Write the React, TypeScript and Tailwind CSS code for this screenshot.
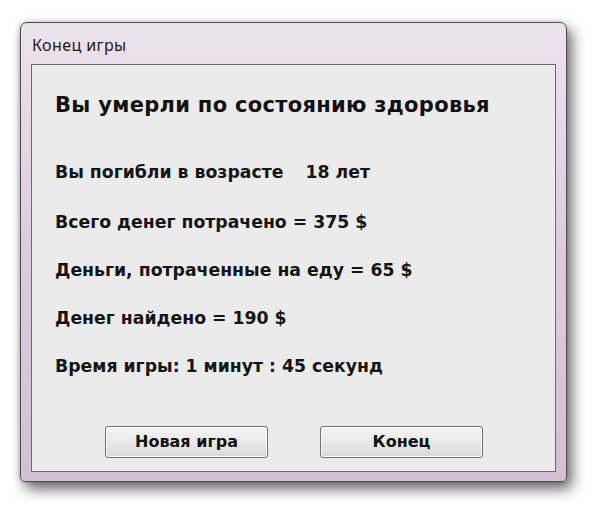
import React from 'react'

const rows = [
  'Всего денег потрачено = 375 $',
  'Деньги, потраченные на еду = 65 $',
  'Денег найдено = 190 $',
  'Время игры: 1 минут : 45 секунд',
]

function DialogButton({ label }: { label: string }) {
  return (
    <button className="h-[32px] w-[163px] rounded-[3px] border border-[#707070] bg-gradient-to-b from-[#f4f4f4] via-[#e9e9e9] to-[#d9d9d9] text-[16px] font-bold text-[#111] shadow-[inset_0_0_0_1px_#fcfcfc]">
      {label}
    </button>
  )
}

export default function App() {
  return (
    <div className="h-[513px] w-[600px] bg-white pl-[20px] pt-[22px] font-['DejaVu_Sans',sans-serif]">
      <div className="flex h-[460px] w-[547px] flex-col rounded-t-[7px] rounded-b-[5px] border border-[#4d4d4d] bg-gradient-to-b from-[#ece3eb] via-[#ddcbdd] to-[#d4bfd5] px-[10px] pb-[9px] shadow-[5px_7px_14px_rgba(0,0,0,0.6),-1px_0_4px_rgba(0,0,0,0.2)]">
        <div className="flex h-[41px] items-center pl-[1px] pt-[2px] font-['Noto_Sans',sans-serif] text-[16px] tracking-[0.4px] text-[#1a1a1a]">
          Конец игры
        </div>
        <div className="flex flex-1 flex-col border border-[#6a6a6a] bg-[#ebebeb] pl-[23px]">
          <h1 className="mt-[26px] h-[28px] text-[21px] leading-[28px] font-bold tracking-[0.3px] text-[#111]">
            Вы умерли по состоянию здоровья
          </h1>
          <div className="mt-[42px] flex h-[24px] items-center text-[17.3px] font-bold text-[#151515]">
            <span>Вы погибли в возрасте</span>
            <span className="ml-[22px]">18 лет</span>
          </div>
          <div className="mt-[2px]" />
          {rows.map((r) => (
            <div key={r} className="mt-[24px] flex h-[24px] items-center text-[17.3px] font-bold text-[#151515]">
              {r}
            </div>
          ))}
          <div className="mt-[47px] flex gap-[52px] pl-[50px]">
            <DialogButton label="Новая игра" />
            <DialogButton label="Конец" />
          </div>
        </div>
      </div>
    </div>
  )
}
